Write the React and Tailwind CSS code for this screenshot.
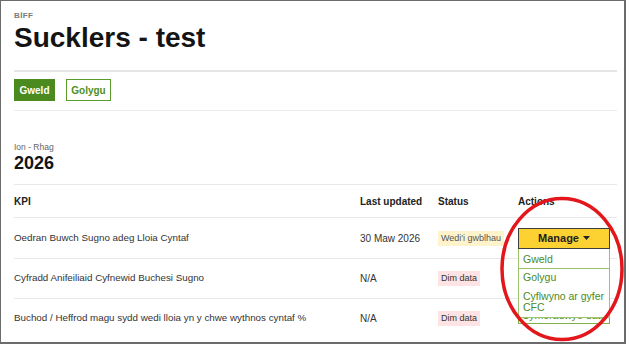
import React from 'react';

const rows = [
  { kpi: 'Oedran Buwch Sugno adeg Lloia Cyntaf', updated: '30 Maw 2026', status: 'done' },
  { kpi: 'Cyfradd Anifeiliaid Cyfnewid Buchesi Sugno', updated: 'N/A', status: 'none' },
  { kpi: 'Buchod / Heffrod magu sydd wedi lloia yn y chwe wythnos cyntaf %', updated: 'N/A', status: 'none' },
];

function StatusBadge({ status }) {
  if (status === 'done') {
    return <span className="inline-block bg-[#fff3cc] px-[3px] text-[9px] leading-[15px] text-[#555]">Wedi&apos;i gwblhau</span>;
  }
  return <span className="inline-block bg-[#fde3e3] px-[3px] text-[9px] leading-[15px] text-[#333]">Dim data</span>;
}

function ManageMenu() {
  return (
    <div className="relative w-[92px]">
      <button className="flex h-[21px] w-full items-center justify-center gap-[4px] border border-[#3d3d3d] bg-[#fbd232] text-[11px] font-semibold text-[#1e1e1e]">
        Manage
        <svg width="7" height="4" viewBox="0 0 7 4">
          <path d="M0 0h7L3.5 4z" fill="#222" />
        </svg>
      </button>
      <div className="absolute left-0 top-full z-10 w-full border-x border-b border-[#9cc46b] bg-white text-[10.5px] text-[#4a8a1e]">
        <div className="h-[20px] border-b border-[#9cc46b] pl-[4px] leading-[20px]">Gweld</div>
        <div className="pl-[4px] pt-[3px] pb-[4px] leading-[11px]">
          <div>Golygu</div>
          <div className="mt-[8px]">Cyflwyno ar gyfer CFC</div>
        </div>
      </div>
    </div>
  );
}

export default function App() {
  return (
    <div className="h-[345px] w-[627px] overflow-hidden bg-white font-['Liberation_Sans',Arial,sans-serif]">
      <div className="relative h-[344px] w-[626px] overflow-hidden border border-r-2 border-b-2 border-[#6b6b6b] pl-[13px] pr-[7px]">
        <div className="mt-[11px] text-[8px] font-semibold leading-[8px] tracking-[0.05em] text-[#7a7a7a]">BİFF</div>
        <h1 className="mt-[4px] text-[28px] font-bold leading-[28px] text-[#141414]">Sucklers - test</h1>
        <div className="mt-[18px] h-[2px] bg-[#e6e6e6]" />

        <div className="mt-[7px] flex h-[22px] gap-[11px]">
          <button className="w-[41px] bg-[#4a8a1e] text-[10px] font-bold text-white">Gweld</button>
          <button className="w-[45px] border border-[#5b9b2b] text-[10px] font-bold text-[#4f8f1c]">Golygu</button>
        </div>
        <div className="mt-[9px] h-px bg-[#ececec]" />

        <div className="mt-[32px] text-[8.5px] leading-[9px] text-[#666]">Ion - Rhag</div>
        <div className="mt-[2px] text-[18px] font-bold leading-[18px] text-[#141414]">2026</div>

        <div className="mt-[12px] border-t border-[#e8e8e8]">
          <div className="grid h-[32px] grid-cols-[346px_78px_80px_1fr] items-center text-[10px] font-bold text-[#222]">
            <div>KPI</div>
            <div>Last updated</div>
            <div>Status</div>
            <div>Actions</div>
          </div>
          {rows.map((row, i) => (
            <div
              key={row.kpi}
              className={`grid grid-cols-[346px_78px_80px_1fr] items-center border-t border-[#e8e8e8] text-[9.8px] text-[#333] ${i === 0 ? 'h-[41px]' : 'h-[40px]'}`}
            >
              <div>{row.kpi}</div>
              <div className="text-[10px]">{row.updated}</div>
              <div><StatusBadge status={row.status} /></div>
              <div className={i === 2 ? 'self-start pt-[3px]' : ''}>
                {i === 0 && <ManageMenu />}
                {i === 2 && (
                  <button className="flex h-[22px] w-[92px] items-end justify-center border border-[#7fb04a] pb-[2px] text-[10.5px] leading-[11px] text-[#4f8f1c]">
                    Cymeradwyo data
                  </button>
                )}
              </div>
            </div>
          ))}
        </div>

        <svg className="pointer-events-none absolute left-0 top-0 z-20 h-[341px] w-[623px]">
          <ellipse cx="561" cy="268" rx="60" ry="70.5" fill="none" stroke="#e3161b" strokeWidth="3.5" />
        </svg>
      </div>
    </div>
  );
}
